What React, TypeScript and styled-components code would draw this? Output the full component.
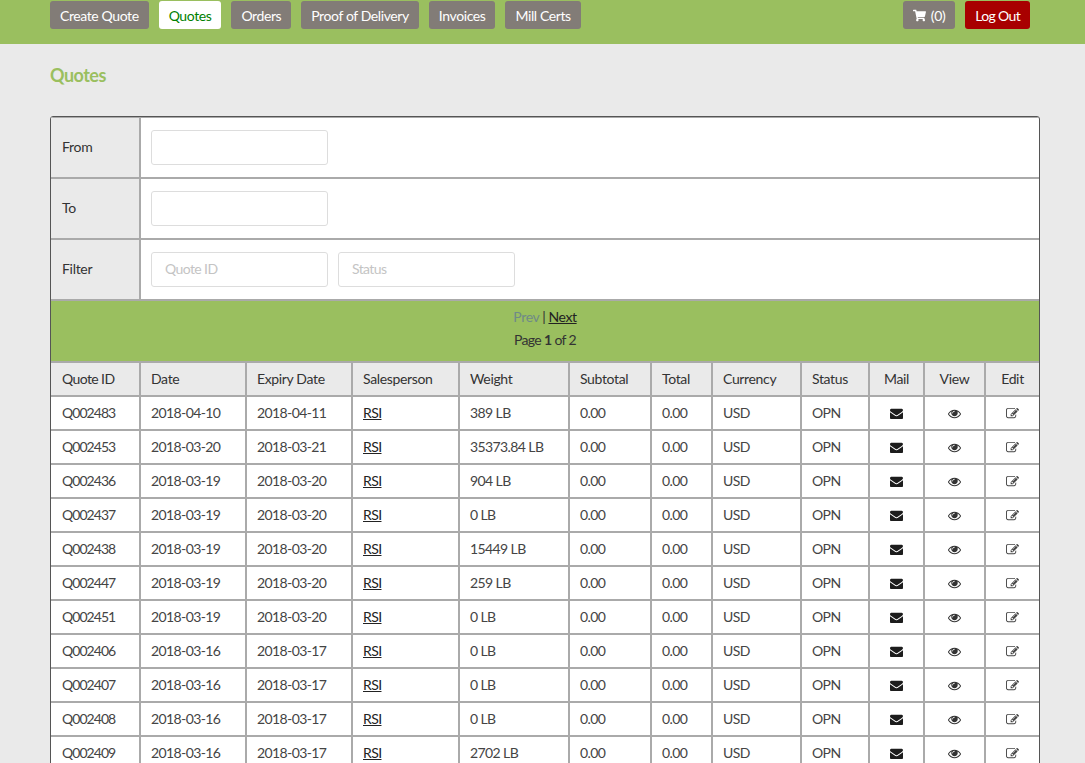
import styled, { createGlobalStyle } from "styled-components";
import { FaShoppingCart } from "react-icons/fa";

interface Quote {
  readonly id: string;
  readonly date: string;
  readonly expiry: string;
  readonly weight: string;
}

const QUOTES: Quote[] = [
  { id: "Q002483", date: "2018-04-10", expiry: "2018-04-11", weight: "389 LB" },
  { id: "Q002453", date: "2018-03-20", expiry: "2018-03-21", weight: "35373.84 LB" },
  { id: "Q002436", date: "2018-03-19", expiry: "2018-03-20", weight: "904 LB" },
  { id: "Q002437", date: "2018-03-19", expiry: "2018-03-20", weight: "0 LB" },
  { id: "Q002438", date: "2018-03-19", expiry: "2018-03-20", weight: "15449 LB" },
  { id: "Q002447", date: "2018-03-19", expiry: "2018-03-20", weight: "259 LB" },
  { id: "Q002451", date: "2018-03-19", expiry: "2018-03-20", weight: "0 LB" },
  { id: "Q002406", date: "2018-03-16", expiry: "2018-03-17", weight: "0 LB" },
  { id: "Q002407", date: "2018-03-16", expiry: "2018-03-17", weight: "0 LB" },
  { id: "Q002408", date: "2018-03-16", expiry: "2018-03-17", weight: "0 LB" },
  { id: "Q002409", date: "2018-03-16", expiry: "2018-03-17", weight: "2702 LB" },
];

const COLUMN_WIDTHS = [89, 106, 106, 107, 110, 82, 61, 89, 68, 55, 61, 54];
const HEADINGS = ["Quote ID", "Date", "Expiry Date", "Salesperson", "Weight", "Subtotal", "Total", "Currency", "Status"];
const NAV_ITEMS = ["Create Quote", "Quotes", "Orders", "Proof of Delivery", "Invoices", "Mill Certs"];

// font awesome 4 glyphs, the package only ships the 5 versions
const ENVELOPE =
  "M1792 710v794q0 66-47 113t-113 47h-1472q-66 0-113-47t-47-113v-794q44 49 101 87 362 246 497 345 57 42 92.5 65.5t94.5 48 110 24.5h2q51 0 110-24.5t94.5-48 92.5-65.5q170-123 498-345 57-39 100-87zm0-294q0 79-49 151t-122 123q-376 261-468 325-10 7-42.5 30.5t-54 38-52 32.5-57.5 27-50 9h-2q-23 0-50-9t-57.5-27-52-32.5-54-38-42.5-30.5q-91-64-262-182.5t-205-142.5q-62-42-117-115.5t-55-136.5q0-78 41.5-130t118.5-52h1472q65 0 112.5 47t47.5 113z";
const EYE =
  "M1664 960q-152-236-381-353 61 104 61 225 0 185-131.5 316.5t-316.5 131.5-316.5-131.5-131.5-316.5q0-121 61-225-229 117-381 353 133 205 333.5 326.5t434.5 121.5 434.5-121.5 333.5-326.5zm-720-384q0-20-14-34t-34-14q-125 0-214.5 89.5t-89.5 214.5q0 20 14 34t34 14 34-14 14-34q0-86 61-147t147-61q20 0 34-14t14-34zm848 384q0 34-20 69-140 230-376.5 368.5t-499.5 138.5-499.5-139-376.5-368q-20-35-20-69t20-69q140-229 376.5-368t499.5-139 499.5 139 376.5 368q20 35 20 69z";
const EDIT =
  "M888 1184l116-116-152-152-116 116v56h96v96h56zm440-720q-16-16-33 1l-350 350q-17 17-1 33t33-1l350-350q17-17 1-33zm80 594v190q0 119-84.5 203.5t-203.5 84.5h-832q-119 0-203.5-84.5t-84.5-203.5v-832q0-119 84.5-203.5t203.5-84.5h832q63 0 117 25 15 7 18 23 3 17-9 29l-49 49q-14 14-32 8-23-6-45-6h-832q-66 0-113 47t-47 113v832q0 66 47 113t113 47h832q66 0 113-47t47-113v-126q0-13 9-22l64-64q15-15 35-7t20 29zm-96-738l288 288-672 672h-288v-288zm444 132l-92 92-288-288 92-92q28-28 68-28t68 28l152 152q28 28 28 68t-28 68z";

const GlobalStyle = createGlobalStyle`
  html, body {
    margin: 0;
    height: 100%;
    overflow: hidden;
    background: #eaeaea;
    font-family: Lato, "Open Sans", sans-serif;
    font-size: 14px;
    color: #333;
  }
`;

const TopBar = styled.header`
  display: flex;
  justify-content: space-between;
  height: 44px;
  padding: 1px 55px 0 50px;
  box-sizing: border-box;
  background: #9abf5f;
`;

const NavGroup = styled.nav`
  display: flex;
  gap: 10px;
`;

const NavButton = styled.a<{ $variant?: "active" | "danger" }>`
  display: flex;
  align-items: center;
  gap: 5px;
  height: 28px;
  padding: 0 10px;
  border-radius: 3px;
  background: ${(p) => (p.$variant === "active" ? "#fff" : p.$variant === "danger" ? "#a80000" : "#827c77")};
  color: ${(p) => (p.$variant === "active" ? "#008000" : "#fff")};
  font-size: 14px;
  letter-spacing: ${(p) => (p.$variant === "danger" ? "-0.66px" : "-0.4px")};
`;

const Main = styled.main`
  padding: 0 45px 0 50px;
`;

const Title = styled.h1`
  margin: 0;
  padding: 21px 0 30px;
  font-size: 18px;
  line-height: 21px;
  font-weight: 700;
  letter-spacing: -0.5px;
  color: #9abf5f;
`;

const TableFrame = styled.div`
  border: 1px solid #555;
  border-radius: 3px;
  overflow: hidden;
  background: #fff;
`;

const Table = styled.table`
  width: 100%;
  table-layout: fixed;
  border-collapse: collapse;
  margin: -1px 0 0 0;
`;

const Label = styled.th`
  height: 61px;
  padding: 0 10px 2px 11px;
  box-sizing: border-box;
  border: 2px solid #aaa;
  border-left: 0;
  background: #eaeaea;
  font-weight: 400;
  text-align: left;
  letter-spacing: -0.3px;
  color: #333;
`;

const FieldCell = styled.td`
  padding: 0 10px;
  border: 2px solid #aaa;
  border-right: 0;
`;

const FieldRow = styled.div`
  display: flex;
  gap: 10px;
`;

const Input = styled.input`
  display: block;
  width: 177px;
  height: 35px;
  padding: 0 13px 2px;
  box-sizing: border-box;
  border: 1px solid #ddd;
  border-radius: 3px;
  background: #fff;
  font-family: inherit;
  font-size: 14px;
  letter-spacing: -0.6px;

  &::placeholder {
    color: #c4c4c4;
  }
`;

const Pager = styled.td`
  height: 62px;
  padding: 0 0 6px;
  box-sizing: border-box;
  border: 2px solid #aaa;
  border-left: 0;
  border-right: 0;
  background: #9abf5f;
  text-align: center;
  line-height: 23px;
  letter-spacing: -0.4px;
  color: #333;
`;

const PageCount = styled.span`
  letter-spacing: -0.65px;
`;

const DisabledLink = styled.span`
  color: #6f8a87;
`;

const TextLink = styled.a`
  color: #222;
  text-decoration: underline;
`;

const HeadCell = styled.th<{ $center?: boolean }>`
  height: 34px;
  padding: 0 10px 2px;
  box-sizing: border-box;
  border: 2px solid #aaa;
  background: #eaeaea;
  font-weight: 400;
  color: #333;
  letter-spacing: -0.35px;
  text-align: ${(p) => (p.$center ? "center" : "left")};

  &:first-child {
    border-left: 0;
    padding-left: 11px;
    letter-spacing: -0.6px;
  }
  &:last-child {
    border-right: 0;
  }
`;

const Cell = styled.td<{ $center?: boolean }>`
  height: 34px;
  padding: 0 10px 2px;
  box-sizing: border-box;
  border: 2px solid #aaa;
  color: #444;
  white-space: nowrap;
  letter-spacing: -0.6px;
  text-align: ${(p) => (p.$center ? "center" : "left")};

  &:first-child {
    border-left: 0;
    padding-left: 11px;
    letter-spacing: -0.95px;
  }
  &:last-child {
    border-right: 0;
  }
`;

const Glyph = styled.svg<{ $tone?: string }>`
  display: inline-block;
  width: 13px;
  height: 13px;
  vertical-align: -2px;
  fill: ${(p) => p.$tone ?? "#1c1c1c"};
`;

const Icon = ({ d, tone }: { d: string; tone?: string }) => (
  <Glyph viewBox="0 0 1792 1792" $tone={tone}>
    <path d={d} />
  </Glyph>
);

export default function App() {
  return (
    <>
      <GlobalStyle />
      <TopBar>
        <NavGroup>
          {NAV_ITEMS.map((item) => (
            <NavButton key={item} $variant={item === "Quotes" ? "active" : undefined}>
              {item}
            </NavButton>
          ))}
        </NavGroup>
        <NavGroup>
          <NavButton>
            <FaShoppingCart size={13} /> (0)
          </NavButton>
          <NavButton $variant="danger">Log Out</NavButton>
        </NavGroup>
      </TopBar>
      <Main>
        <Title>Quotes</Title>
        <TableFrame>
          <Table>
            <colgroup>
              {COLUMN_WIDTHS.map((w, i) => (
                <col key={i} width={w} />
              ))}
            </colgroup>
            <tbody>
              <tr>
                <Label>From</Label>
                <FieldCell colSpan={11}>
                  <Input />
                </FieldCell>
              </tr>
              <tr>
                <Label>To</Label>
                <FieldCell colSpan={11}>
                  <Input />
                </FieldCell>
              </tr>
              <tr>
                <Label>Filter</Label>
                <FieldCell colSpan={11}>
                  <FieldRow>
                    <Input placeholder="Quote ID" />
                    <Input placeholder="Status" />
                  </FieldRow>
                </FieldCell>
              </tr>
              <tr>
                <Pager colSpan={12}>
                  <DisabledLink>Prev</DisabledLink> | <TextLink>Next</TextLink>
                  <br />
                  <PageCount>
                    Page <b>1</b> of 2
                  </PageCount>
                </Pager>
              </tr>
              <tr>
                {HEADINGS.map((h) => (
                  <HeadCell key={h}>{h}</HeadCell>
                ))}
                <HeadCell $center>Mail</HeadCell>
                <HeadCell $center>View</HeadCell>
                <HeadCell $center>Edit</HeadCell>
              </tr>
              {QUOTES.map((q) => (
                <tr key={q.id}>
                  <Cell>{q.id}</Cell>
                  <Cell>{q.date}</Cell>
                  <Cell>{q.expiry}</Cell>
                  <Cell>
                    <TextLink>RSI</TextLink>
                  </Cell>
                  <Cell>{q.weight}</Cell>
                  <Cell>0.00</Cell>
                  <Cell>0.00</Cell>
                  <Cell>USD</Cell>
                  <Cell>OPN</Cell>
                  <Cell $center>
                    <Icon d={ENVELOPE} />
                  </Cell>
                  <Cell $center>
                    <Icon d={EYE} tone="#333" />
                  </Cell>
                  <Cell $center>
                    <Icon d={EDIT} tone="#444" />
                  </Cell>
                </tr>
              ))}
            </tbody>
          </Table>
        </TableFrame>
      </Main>
    </>
  );
}
